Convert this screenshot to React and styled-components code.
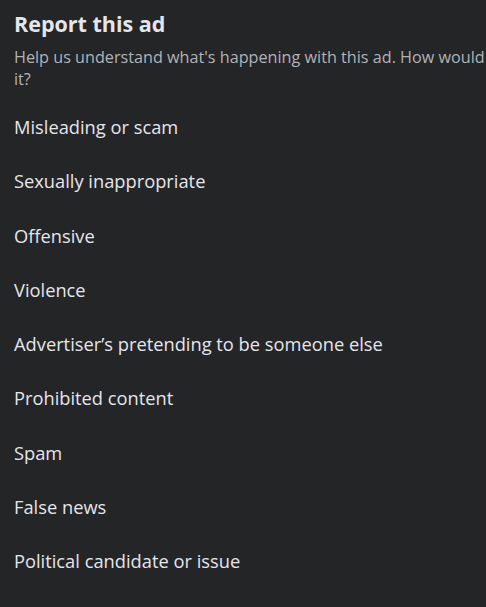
import styled, { createGlobalStyle } from 'styled-components';

const GlobalStyle = createGlobalStyle`
  html, body {
    margin: 0;
    padding: 0;
    background: #242526;
    overflow: hidden;
  }
`;

const Panel = styled.div`
  width: 486px;
  height: 607px;
  overflow: hidden;
  background: #242526;
  font-family: "Open Sans", "Noto Sans", sans-serif;
  padding: 9px 0 0 14px;
  box-sizing: border-box;
`;

const Title = styled.h2`
  margin: 0;
  font-size: 21.5px;
  font-weight: 700;
  line-height: 30px;
  color: #e4e6eb;
`;

const Subtitle = styled.p`
  margin: 7px 0 0;
  width: 588px;
  font-size: 16.2px;
  line-height: 22px;
  color: #b0b3b8;
`;

const List = styled.ul`
  list-style: none;
  margin: 10px 0 0;
  padding: 0;
`;

const Option = styled.li`
  font-size: 18.3px;
  line-height: 54.25px;
  height: 54.25px;
  color: #e4e6eb;
  cursor: pointer;
`;

const reasons = [
  'Misleading or scam',
  'Sexually inappropriate',
  'Offensive',
  'Violence',
  "Advertiser\u2019s pretending to be someone else",
  'Prohibited content',
  'Spam',
  'False news',
  'Political candidate or issue',
];

const App = () => {
  return (
    <>
      <GlobalStyle />
      <Panel>
        <Title>Report this ad</Title>
        <Subtitle>
          Help us understand what's happening with this ad. How would you describe it?
        </Subtitle>
        <List>
          {reasons.map((r) => (
            <Option key={r}>{r}</Option>
          ))}
        </List>
      </Panel>
    </>
  );
};

export default App;
